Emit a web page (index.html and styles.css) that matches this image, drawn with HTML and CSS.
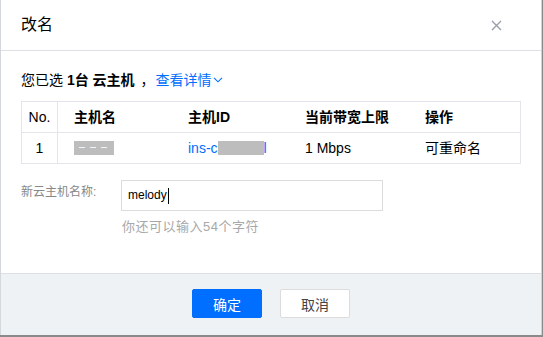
FILE: index.html
```html
<!DOCTYPE html>
<html lang="zh-CN">
<head>
    <meta charset="UTF-8" />
    <meta name="viewport" content="width=device-width, initial-scale=1" />
    <title>改名</title>
    <link rel="stylesheet" href="styles.css">
</head>
<body>
    <div class="dialog">
        <div class="dialog-header">
            <h1 class="dialog-title">改名</h1>
            <button class="close-btn" aria-label="关闭">
                <svg width="11" height="11" viewBox="0 0 11 11">
                    <path d="M1 1 L10 10 M10 1 L1 10" stroke="#9a9ea6" stroke-width="1.4" fill="none" />
                </svg>
            </button>
        </div>

        <div class="dialog-body">
            <p class="summary">
                您已选 <strong>1台 云主机</strong><span class="comma">，</span><a href="#" class="link">查看详情<svg class="chevron" width="10" height="6" viewBox="0 0 10 6"><path d="M1 0.8 L5 4.8 L9 0.8" stroke="#006eff" stroke-width="1.1" fill="none" /></svg></a>
            </p>

            <div class="table">
                <div class="table-row table-head">
                    <div class="cell cell-no">No.</div>
                    <div class="cell">主机名</div>
                    <div class="cell">主机ID</div>
                    <div class="cell">当前带宽上限</div>
                    <div class="cell">操作</div>
                </div>
                <div class="table-row">
                    <div class="cell cell-no">1</div>
                    <div class="cell"><span class="blur blur-name"><i></i><i></i><i></i></span></div>
                    <div class="cell"><a href="#" class="link">ins-c<span class="blur blur-id"></span>l</a></div>
                    <div class="cell">1 Mbps</div>
                    <div class="cell">可重命名</div>
                </div>
            </div>

            <div class="form-row">
                <label class="form-label">新云主机名称:</label>
                <div class="form-control">
                    <div class="input">melody<span class="caret"></span></div>
                    <p class="hint">你还可以输入54个字符</p>
                </div>
            </div>
        </div>

        <div class="dialog-footer">
            <button class="btn btn-primary">确定</button>
            <button class="btn btn-weak">取消</button>
        </div>
    </div>
</body>
</html>
```

FILE: styles.css
```css
body {
    margin: 0;
    background: #8a8a8a;
    font-family: 'Liberation Sans', 'Noto Sans CJK SC', sans-serif;
    color: #000;
}
.dialog {
    box-sizing: border-box;
    width: 542px;
    height: 335px;
    background: #fff;
    border-left: 1px solid #d4d8dd;
    border-right: 1px solid #cfd2d6;
    display: flex;
    flex-direction: column;
}
.dialog-header {
    height: 50px;
    border-bottom: 1px solid #dcdfe3;
    display: flex;
    align-items: center;
    justify-content: space-between;
    padding: 0 39px 0 20px;
    flex-shrink: 0;
}
.dialog-title {
    margin: 0;
    font-size: 16px;
    font-weight: normal;
    line-height: 20px;
}
.close-btn {
    background: none;
    border: none;
    padding: 0;
    width: 11px;
    height: 11px;
    cursor: pointer;
    display: flex;
}
.dialog-body {
    flex: 1;
    padding: 19px 20px 0 20px;
}
.summary {
    margin: 0;
    font-size: 14px;
    line-height: 20px;
}
.summary strong {
    font-weight: bold;
}
.comma {
    margin: 0 1px 0 6px;
}
.link {
    color: #006eff;
    text-decoration: none;
}
.chevron {
    margin-left: 1px;
    vertical-align: 2px;
}
.table {
    margin-top: 11px;
    border: 1px solid #e2e6ec;
    font-size: 14px;
}
.table-row {
    display: grid;
    grid-template-columns: 36px 114px 117px 120px 1fr;
    height: 30px;
    align-items: center;
}
.table-row + .table-row {
    border-top: 1px solid #e2e6ec;
}
.table-head {
    font-weight: bold;
}
.cell {
    padding-left: 16px;
    height: 30px;
    line-height: 30px;
    white-space: nowrap;
}
.cell-no {
    padding-left: 0;
    text-align: center;
    border-right: 1px solid #e2e6ec;
    font-weight: normal;
}
.blur {
    display: inline-block;
    background: #bdbdbd;
    vertical-align: middle;
    height: 14px;
}
.blur-name {
    width: 40px;
    margin-top: -2px;
    position: relative;
}
.blur-name i {
    display: inline-block;
    width: 6px;
    height: 1px;
    background: #eef4fb;
    margin: 6px 0 0 5px;
    vertical-align: top;
}
.blur-id {
    width: 46px;
    margin-top: -2px;
}
.form-row {
    display: flex;
    margin-top: 16px;
}
.form-label {
    width: 100px;
    flex-shrink: 0;
    font-size: 12px;
    line-height: 20px;
    padding-top: 2px;
    color: #888;
}
.form-control {
    display: flex;
    flex-direction: column;
}
.input {
    box-sizing: border-box;
    width: 262px;
    height: 31px;
    border: 1px solid #dcdcdc;
    padding: 0 6px;
    font-size: 12px;
    line-height: 31px;
    display: flex;
    align-items: center;
}
.caret {
    display: inline-block;
    width: 1px;
    height: 16px;
    background: #000;
    margin-left: 1px;
}
.hint {
    margin: 7px 0 0 1px;
    font-size: 13px;
    line-height: 18px;
    color: #a8a8a8;
    letter-spacing: 0.5px;
}
.dialog-footer {
    height: 62px;
    box-sizing: border-box;
    border-top: 1px solid #dcdfe3;
    background: #eff2f5;
    display: flex;
    justify-content: center;
    align-items: flex-start;
    gap: 18px;
    padding-top: 15px;
    flex-shrink: 0;
}
.btn {
    box-sizing: border-box;
    width: 70px;
    height: 29px;
    border-radius: 2px;
    font-family: inherit;
    font-size: 14px;
    cursor: pointer;
    padding: 0;
}
.btn-primary {
    background: #006eff;
    border: 1px solid #006eff;
    color: #fff;
}
.btn-weak {
    background: #fff;
    border: 1px solid #dcdcdc;
    color: #444;
}
```
